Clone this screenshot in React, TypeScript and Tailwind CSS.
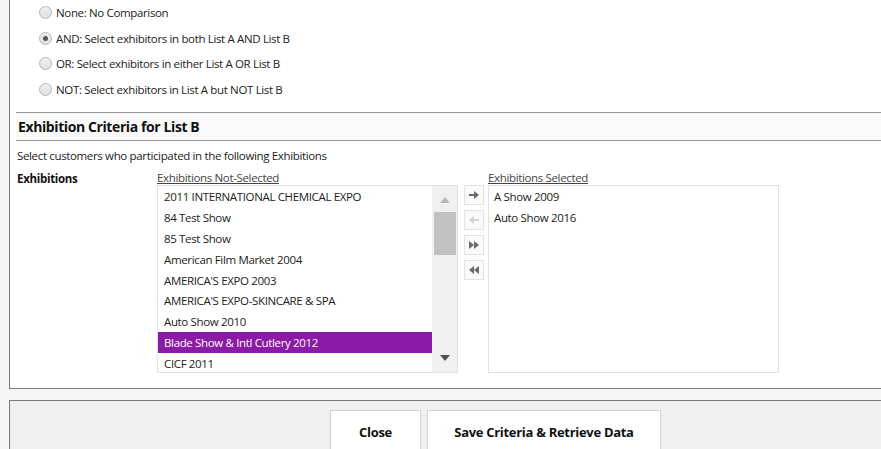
import React from "react";

const font = { fontFamily: '"Open Sans", "Noto Sans", Arial, sans-serif' };

function Radio({ checked }: { checked?: boolean }) {
  return (
    <div className="w-[13px] h-[13px] rounded-full border border-[#b5b5b5] bg-gradient-to-b from-[#f0f0f0] to-[#e0e0e0] flex items-center justify-center shrink-0">
      {checked && <div className="w-[5px] h-[5px] rounded-full bg-[#555]" />}
    </div>
  );
}

const notSelected = [
  "2011 INTERNATIONAL CHEMICAL EXPO",
  "84 Test Show",
  "85 Test Show",
  "American Film Market 2004",
  "AMERICA'S EXPO 2003",
  "AMERICA'S EXPO-SKINCARE & SPA",
  "Auto Show 2010",
  "Blade Show & Intl Cutlery 2012",
  "CICF 2011",
];

function ArrowBtn({ children }: { children: React.ReactNode }) {
  return (
    <div className="w-[20px] h-[20px] border border-[#e3e3e3] bg-[#fafafa] flex items-center justify-center">
      {children}
    </div>
  );
}

export default function App() {
  return (
    <div className="w-[881px] h-[449px] overflow-hidden bg-[#f6f6f6] pl-[9px] text-[#222]" style={font}>
      <div className="h-[389px] bg-white border-l border-b border-[#7a7a7a] flex flex-col">
        <div className="pl-[29px] flex flex-col text-[11.5px]">
          {[
            ["None: No Comparison", false],
            ["AND: Select exhibitors in both List A AND List B", true],
            ["OR: Select exhibitors in either List A OR List B", false],
            ["NOT: Select exhibitors in List A but NOT List B", false],
          ].map(([t, c], i) => (
            <div key={i} className="h-[25.6px] flex items-center gap-[4px]">
              <Radio checked={c as boolean} />
              <span className="tracking-[-0.35px]">{t as string}</span>
            </div>
          ))}
        </div>
        <div className="ml-[6px] mt-[10px] h-[29px] border-t border-b border-[#9a9a9a] bg-[#f9f9f9] flex items-center pl-[2px]">
          <span className="text-[14px] font-bold tracking-[-0.4px] text-[#111]">Exhibition Criteria for List B</span>
        </div>
        <div className="ml-[7px] mt-[6px] text-[11.5px] tracking-[-0.35px]">Select customers who participated in the following Exhibitions</div>
        <div className="ml-[7px] mt-[5px] flex text-[11.5px]">
          <div className="w-[140px] font-bold tracking-[-0.3px] text-[#111]">Exhibitions</div>
          <div className="flex flex-col">
            <div className="underline tracking-[-0.35px] leading-[15px] text-[#444]">Exhibitions Not-Selected</div>
            <div className="w-[301px] h-[188px] border border-[#e0e0e0] flex">
              <div className="flex-1 flex flex-col pt-[1px]">
                {notSelected.map((s, i) => (
                  <div
                    key={i}
                    className={
                      "h-[20.8px] shrink-0 flex items-center pl-[6px] tracking-[-0.35px] " +
                      (i === 7 ? "bg-[#8b1aa6] text-white" : "")
                    }
                  >
                    {s}
                  </div>
                ))}
              </div>
              <div className="w-[25px] bg-[#f0f0f0] flex flex-col items-center">
                <svg width="12" height="8" viewBox="0 0 12 8" className="mt-[10px]">
                  <polygon points="6,1 11,7 1,7" fill="#b8b8b8" />
                </svg>
                <div className="w-[22px] h-[43px] bg-[#c1c1c1] mt-[8px]" />
                <div className="flex-1" />
                <svg width="12" height="8" viewBox="0 0 12 8" className="mb-[10px]">
                  <polygon points="1,1 11,1 6,7" fill="#505050" />
                </svg>
              </div>
            </div>
          </div>
          <div className="flex flex-col gap-[5px] mt-[15px] ml-[6px] mr-[4px]">
            <ArrowBtn>
              <svg width="10" height="8" viewBox="0 0 10 8">
                <path d="M0 3h5V0l5 4-5 4V5H0z" fill="#6a6a6a" />
              </svg>
            </ArrowBtn>
            <ArrowBtn>
              <svg width="10" height="8" viewBox="0 0 10 8">
                <path d="M10 3H5V0L0 4l5 4V5h5z" fill="#d4d4d4" />
              </svg>
            </ArrowBtn>
            <ArrowBtn>
              <svg width="10" height="8" viewBox="0 0 10 8">
                <path d="M0 0l5 4-5 4zM5 0l5 4-5 4z" fill="#6a6a6a" />
              </svg>
            </ArrowBtn>
            <ArrowBtn>
              <svg width="10" height="8" viewBox="0 0 10 8">
                <path d="M10 0L5 4l5 4zM5 0L0 4l5 4z" fill="#6a6a6a" />
              </svg>
            </ArrowBtn>
          </div>
          <div className="flex flex-col">
            <div className="underline tracking-[-0.35px] leading-[15px] text-[#444]">Exhibitions Selected</div>
            <div className="w-[291px] h-[188px] border border-[#e0e0e0] flex flex-col pt-[1px]">
              {["A Show 2009", "Auto Show 2016"].map((s, i) => (
                <div key={i} className="h-[20.8px] flex items-center pl-[5px] tracking-[-0.35px]">
                  {s}
                </div>
              ))}
            </div>
          </div>
        </div>
      </div>
      <div className="mt-[11px] h-[60px] bg-[#f0f0f0] border-l border-t border-[#7a7a7a] flex justify-center pt-[9px] pl-[100px]">
        <div className="flex gap-[6px] text-[13px] font-bold text-[#111] tracking-[-0.3px]">
          <div className="w-[91px] h-[50px] bg-white border border-[#d0d0d0] flex items-start justify-center pt-[12px]">Close</div>
          <div className="w-[234px] h-[50px] bg-white border border-[#d0d0d0] flex items-start justify-center pt-[12px]">Save Criteria &amp; Retrieve Data</div>
        </div>
      </div>
    </div>
  );
}
